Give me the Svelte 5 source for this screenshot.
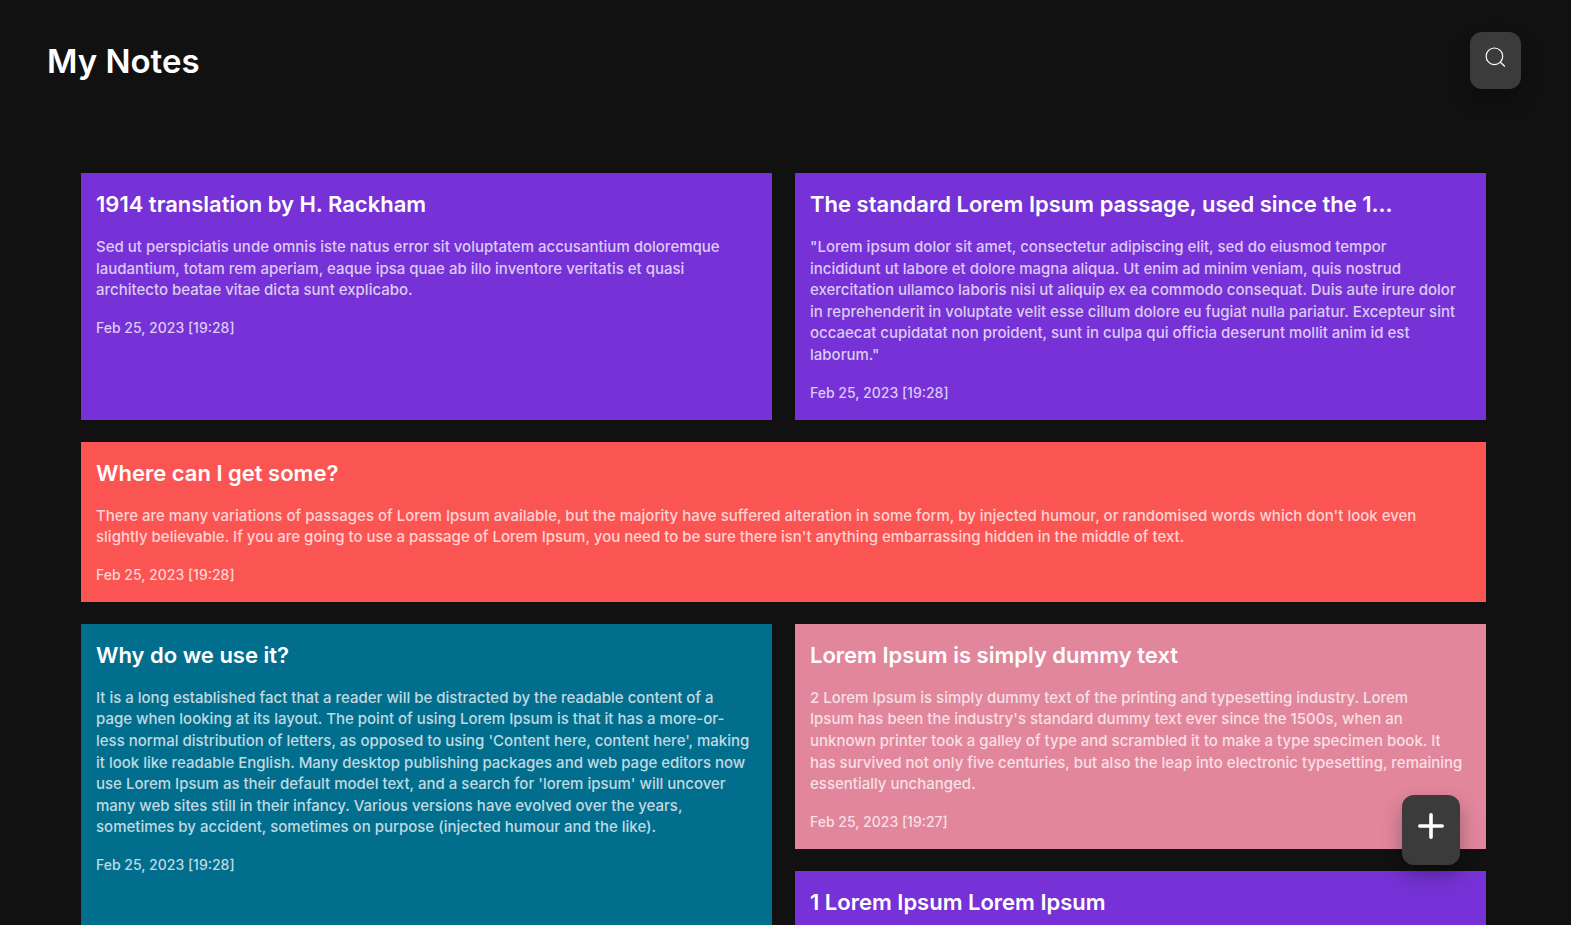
<script>
  const notes = [
    {
      title: '1914 translation by H. Rackham',
      body: `Sed ut perspiciatis unde omnis iste natus error sit voluptatem accusantium doloremque
laudantium, totam rem aperiam, eaque ipsa quae ab illo inventore veritatis et quasi
architecto beatae vitae dicta sunt explicabo.`,
      date: 'Feb 25, 2023 [19:28]',
      tone: 'violet',
    },
    {
      title: 'The standard Lorem Ipsum passage, used since the 1...',
      body: `"Lorem ipsum dolor sit amet, consectetur adipiscing elit, sed do eiusmod tempor
incididunt ut labore et dolore magna aliqua. Ut enim ad minim veniam, quis nostrud
exercitation ullamco laboris nisi ut aliquip ex ea commodo consequat. Duis aute irure dolor
in reprehenderit in voluptate velit esse cillum dolore eu fugiat nulla pariatur. Excepteur sint
occaecat cupidatat non proident, sunt in culpa qui officia deserunt mollit anim id est
laborum."`,
      date: 'Feb 25, 2023 [19:28]',
      tone: 'violet',
    },
    {
      title: 'Where can I get some?',
      body: `There are many variations of passages of Lorem Ipsum available, but the majority have suffered alteration in some form, by injected humour, or randomised words which don't look even
slightly believable. If you are going to use a passage of Lorem Ipsum, you need to be sure there isn't anything embarrassing hidden in the middle of text.`,
      date: 'Feb 25, 2023 [19:28]',
      tone: 'coral',
      span: 'wide',
    },
    {
      title: 'Why do we use it?',
      body: `It is a long established fact that a reader will be distracted by the readable content of a
page when looking at its layout. The point of using Lorem Ipsum is that it has a more-or-
less normal distribution of letters, as opposed to using 'Content here, content here', making
it look like readable English. Many desktop publishing packages and web page editors now
use Lorem Ipsum as their default model text, and a search for 'lorem ipsum' will uncover
many web sites still in their infancy. Various versions have evolved over the years,
sometimes by accident, sometimes on purpose (injected humour and the like).`,
      date: 'Feb 25, 2023 [19:28]',
      tone: 'teal',
      span: 'tall',
    },
    {
      title: 'Lorem Ipsum is simply dummy text',
      body: `2 Lorem Ipsum is simply dummy text of the printing and typesetting industry. Lorem
Ipsum has been the industry's standard dummy text ever since the 1500s, when an
unknown printer took a galley of type and scrambled it to make a type specimen book. It
has survived not only five centuries, but also the leap into electronic typesetting, remaining
essentially unchanged.`,
      date: 'Feb 25, 2023 [19:27]',
      tone: 'rose',
    },
    {
      title: '1 Lorem Ipsum Lorem Ipsum',
      body: '',
      date: '',
      tone: 'violet',
    },
  ];
</script>

<div class="page">
  <header>
    <h1>My Notes</h1>
    <button class="tool search" type="button" aria-label="Search notes">
      <svg width="24" height="24" viewBox="0 0 24 24" fill="none" stroke="currentColor" stroke-width="1.2" stroke-linecap="round" aria-hidden="true">
        <circle cx="10.4" cy="11.3" r="8.3" />
        <path d="M16.4 17.2l4.2 4" />
      </svg>
    </button>
  </header>

  <main>
    {#each notes as note}
      <article class="note {note.tone} {note.span ?? ''}">
        <h2>{note.title}</h2>
        {#if note.body}<p>{note.body}</p>{/if}
        {#if note.date}<p class="date">{note.date}</p>{/if}
      </article>
    {/each}
  </main>

  <button class="tool add" type="button" aria-label="Add note">
    <svg width="28" height="28" viewBox="0 0 28 28" fill="none" stroke="currentColor" stroke-width="3.6" stroke-linecap="round" aria-hidden="true">
      <path d="M14 2.8v22.4M2.8 14h22.4" />
    </svg>
  </button>
</div>

<style>
  :global(body) {
    margin: 0;
    background: #111;
  }

  .page {
    box-sizing: border-box;
    height: 100vh;
    overflow: hidden;
    color: #fff;
    font-family: Inter, 'Open Sans', sans-serif;
  }

  header {
    display: flex;
    justify-content: space-between;
    align-items: center;
    padding: 32px 50px 0 47px;
  }

  h1 {
    margin: 0;
    font-size: 33px;
    font-weight: 600;
    line-height: 48px;
  }

  .tool {
    display: flex;
    justify-content: center;
    align-items: flex-start;
    border: 0;
    border-radius: 12px;
    background: #3b3b3b;
    color: #fff;
    box-shadow: 0 10px 20px rgba(0, 0, 0, 0.3);
    cursor: pointer;
  }

  .search {
    width: 51px;
    height: 57px;
    padding: 13px 0 0;
  }

  .add {
    position: fixed;
    right: 111px;
    bottom: 60px;
    width: 58px;
    height: 70px;
    padding: 17px 0 0;
  }

  main {
    display: grid;
    grid-template-columns: repeat(2, minmax(0, 1fr));
    gap: 22px 23px;
    padding: 84px 85px 22px 81px;
  }

  .note {
    display: flex;
    flex-direction: column;
    gap: 16px;
    box-sizing: border-box;
    min-height: 120px;
    padding: 16px 15px;
  }

  .wide {
    grid-column: 1 / -1;
  }

  .tall {
    grid-row: span 2;
  }

  .violet {
    background: #7632d6;
  }

  .coral {
    background: #fb5553;
  }

  .teal {
    background: #026e8e;
  }

  .rose {
    background: #e2869c;
  }

  h2 {
    margin: 0;
    font-size: 22px;
    font-weight: 600;
    line-height: 31px;
  }

  p {
    margin: 0;
    color: rgba(255, 255, 255, 0.75);
    font-size: 15px;
    font-weight: 500;
    line-height: 1.44;
    white-space: pre-line;
  }

  .date {
    font-size: 14px;
    line-height: 22px;
  }
</style>
